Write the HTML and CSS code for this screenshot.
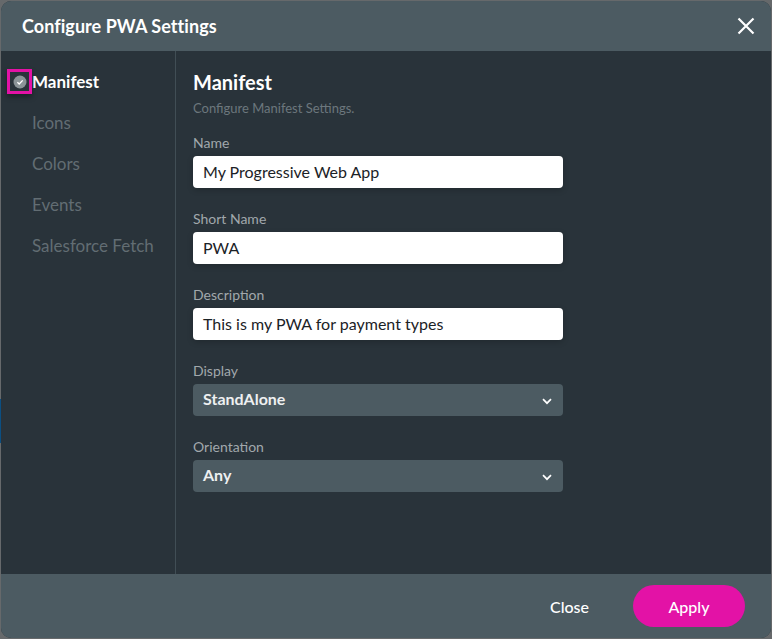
FILE: index.html
```html
<!DOCTYPE html>
<html lang="en">
<head>
<meta charset="utf-8">
<title>Configure PWA Settings</title>
<link rel="stylesheet" href="styles.css">
</head>
<body>
<div class="edge-mark"></div>
<div class="modal">
  <header class="modal-header">
    <h1 class="modal-title">Configure PWA Settings</h1>
    <button class="close-x" aria-label="Close">
      <svg width="18" height="18" viewBox="0 0 18 18"><path d="M1.5 1.5 16.5 16.5M16.5 1.5 1.5 16.5" stroke="#fff" stroke-width="2.2" fill="none"/></svg>
    </button>
  </header>
  <div class="modal-body">
    <nav class="sidebar">
      <div class="step step-active">
        <span class="step-marker">
          <svg width="14" height="14" viewBox="0 0 14 14"><circle cx="7" cy="7" r="6.5" fill="#8b9498"/><path d="M4.4 7.3 6.2 9 9.7 5.4" stroke="#fff" stroke-width="1.3" fill="none"/></svg>
        </span>
        Manifest
      </div>
      <div class="step">Icons</div>
      <div class="step">Colors</div>
      <div class="step">Events</div>
      <div class="step">Salesforce Fetch</div>
    </nav>
    <main class="content">
      <h2 class="content-title">Manifest</h2>
      <p class="content-sub">Configure Manifest Settings.</p>
      <div class="field">
        <label class="field-label">Name</label>
        <div class="input">My Progressive Web App</div>
      </div>
      <div class="field">
        <label class="field-label">Short Name</label>
        <div class="input">PWA</div>
      </div>
      <div class="field">
        <label class="field-label">Description</label>
        <div class="input">This is my PWA for payment types</div>
      </div>
      <div class="field">
        <label class="field-label">Display</label>
        <div class="select">StandAlone
          <svg class="chev" width="10" height="7" viewBox="0 0 10 7"><path d="M1 1.2 5 5.2 9 1.2" stroke="#fff" stroke-width="1.7" fill="none"/></svg>
        </div>
      </div>
      <div class="field">
        <label class="field-label">Orientation</label>
        <div class="select">Any
          <svg class="chev" width="10" height="7" viewBox="0 0 10 7"><path d="M1 1.2 5 5.2 9 1.2" stroke="#fff" stroke-width="1.7" fill="none"/></svg>
        </div>
      </div>
    </main>
  </div>
  <footer class="modal-footer">
    <button class="btn-close">Close</button>
    <button class="btn-apply">Apply</button>
  </footer>
</div>
</body>
</html>
```
FILE: styles.css
```css
* { box-sizing: border-box; }
html, body { margin: 0; height: 100%; }
body {
  background: #66696b;
  font-family: Lato, "Liberation Sans", sans-serif;
  padding: 1px 1px 1px 1px;
  height: 639px;
  overflow: hidden;
  position: relative;
}
.edge-mark {
  position: absolute;
  left: 0;
  top: 399px;
  width: 1px;
  height: 44px;
  background: #0b4f82;
}
.modal {
  height: 637px;
  display: flex;
  flex-direction: column;
  background: #29333a;
  border-radius: 10px;
  overflow: hidden;
}
.modal-header {
  height: 50px;
  flex: none;
  background: #4c5b62;
  display: flex;
  align-items: center;
  justify-content: space-between;
  padding: 0 16px 0 21px;
}
.modal-title {
  margin: 0;
  font-size: 18px;
  font-weight: 700;
  letter-spacing: 0.05px;
  color: #fff;
}
.close-x {
  background: none;
  border: 0;
  padding: 0;
  width: 18px;
  height: 18px;
  display: block;
  line-height: 0;
}
.modal-body {
  flex: 1;
  display: flex;
  min-height: 0;
}
.sidebar {
  width: 175px;
  flex: none;
  border-right: 1px solid #414e55;
  padding: 10px 0 0 31px;
}
.step {
  height: 41px;
  display: flex;
  align-items: center;
  font-size: 17px;
  color: #626d73;
  position: relative;
}
.step-active {
  color: #fff;
  font-size: 17px;
  font-weight: 700;
}
.step-marker {
  position: absolute;
  left: -25px;
  top: 8px;
  width: 25px;
  height: 25px;
  border: 3px solid #e312a6;
  display: flex;
  align-items: center;
  justify-content: center;
  box-shadow: 0 3px 5px rgba(0, 0, 0, 0.35);
}
.content {
  flex: 1;
  padding: 18px 0 0 17px;
}
.content-title {
  margin: 0;
  font-size: 20px;
  line-height: 26px;
  font-weight: 700;
  color: #fff;
}
.content-sub {
  margin: 5px 0 0;
  font-size: 13px;
  line-height: 16px;
  color: #6c777d;
}
.field {
  width: 370px;
  margin-top: 22px;
}
.content-sub + .field { margin-top: 18px; }
.field-label {
  display: block;
  font-size: 14px;
  line-height: 17px;
  color: #a1a8ac;
  margin-bottom: 5px;
}
.input {
  height: 32px;
  background: #fff;
  border-radius: 4px;
  padding: 0 10px;
  font-size: 16px;
  line-height: 32px;
  color: #1b2226;
  box-shadow: 0 2px 6px rgba(0, 0, 0, 0.2);
}
.select {
  height: 32px;
  background: #4c5b62;
  border-radius: 4px;
  padding: 0 11px 3px 10px;
  font-size: 16px;
  font-weight: 700;
  color: #eef0f1;
  display: flex;
  align-items: center;
  justify-content: space-between;
}
.chev { display: block; margin-top: 5px; }
.modal-footer {
  height: 64px;
  flex: none;
  background: #4c5b62;
  display: flex;
  align-items: center;
  justify-content: flex-end;
  padding: 0 26px 0 0;
}
.btn-close {
  background: none;
  border: 0;
  padding: 0;
  font: 500 16px Lato, "Liberation Sans", sans-serif;
  color: #fff;
  margin-right: 44px;
}
.btn-apply {
  width: 112px;
  height: 42px;
  border: 0;
  border-radius: 21px;
  background: #e312a6;
  color: #fff;
  font: 500 16px Lato, "Liberation Sans", sans-serif;
  padding: 0;
}
```
